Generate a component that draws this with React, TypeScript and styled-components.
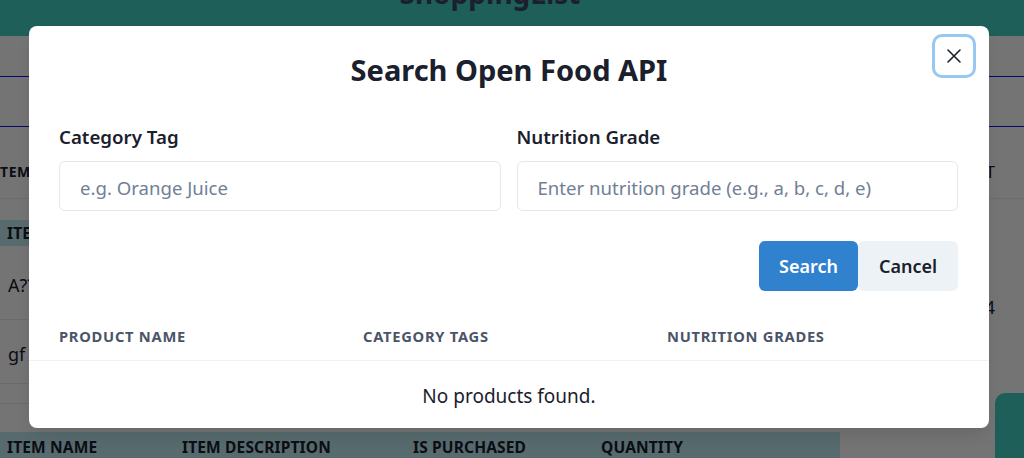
import React from "react";
import styled, { createGlobalStyle } from "styled-components";

const FONT = `"Noto Sans", "Open Sans", sans-serif`;

const Global = createGlobalStyle`
  html, body { margin: 0; padding: 0; }
  body {
    width: 1024px;
    height: 458px;
    overflow: hidden;
    background: #fcfdff;
    font-family: ${FONT};
    color: #1a202c;
  }
  * { box-sizing: border-box; }
`;

/* ---------- background page ---------- */
const Page = styled.div`
  position: relative;
  width: 1024px;
  height: 458px;
  overflow: hidden;
`;

const TopBar = styled.header`
  position: relative;
  z-index: 20;
  height: 36px;
  background: #1f5f5a;
  display: flex;
  justify-content: center;
  overflow: hidden;
`;

const AppTitle = styled.h1`
  margin: -24px 0 0 -44px;
  font-size: 28px;
  line-height: 34px;
  font-weight: 700;
  color: #1a202c;
`;

const Spacer = styled.div<{ $h: number }>`
  height: ${(p) => p.$h}px;
`;

const NavStrip = styled.nav`
  height: 51px;
  border-top: 1px solid #1010ff;
  border-bottom: 1px solid #1010ff;
`;

const SectionRow = styled.div`
  display: flex;
  justify-content: space-between;
  align-items: center;
  height: 72px;
  padding-top: 18px;
  border-bottom: 1px solid #e6e9ef;
  font-weight: 700;
  font-size: 14px;
  color: #1a202c;
`;

const SectionLeft = styled.span`
  margin-left: -6px;
  letter-spacing: 0.04em;
`;

const SectionRight = styled.span`
  margin-right: 29px;
  font-weight: 400;
  font-size: 17px;
`;

const Layout = styled.div`
  display: grid;
  grid-template-columns: 840px 1fr;
`;

const TableBand = styled.div<{ $top: number; $h: number }>`
  margin-top: ${(p) => p.$top}px;
  height: ${(p) => p.$h}px;
  background: #bde9f0;
  display: grid;
  grid-template-columns: 175px 231px 188px 1fr;
  align-items: center;
  padding-left: 7px;
  font-size: 15.5px;
  font-weight: 700;
  color: #1a202c;
  letter-spacing: 0.01em;
`;

const DataRow = styled.div<{ $h: number }>`
  height: ${(p) => p.$h}px;
  display: flex;
  align-items: center;
  padding-left: 8px;
  padding-top: 4px;
  border-bottom: 1px solid #e6e9ef;
  font-size: 18px;
  color: #1a202c;
`;

const SideCol = styled.div`
  display: flex;
  flex-direction: column;
  align-items: flex-end;
  padding-right: 29px;
  padding-top: 66px;
  font-size: 18px;
`;

const Fab = styled.div`
  position: absolute;
  z-index: 20;
  right: -20px;
  bottom: -20px;
  width: 49px;
  height: 85px;
  border-radius: 10px;
  background: #1f5f5a;
`;

/* ---------- overlay & modal ---------- */
const Backdrop = styled.div`
  position: absolute;
  inset: 0;
  z-index: 10;
  background: rgba(0, 0, 0, 0.54);
`;

const Modal = styled.section`
  position: absolute;
  z-index: 30;
  left: 29px;
  top: 26px;
  width: 960px;
  height: 402px;
  background: #ffffff;
  border-radius: 8px;
  box-shadow: 0 10px 15px -3px rgba(0, 0, 0, 0.1);
  display: flex;
  flex-direction: column;
`;

const ModalTitle = styled.h2`
  margin: 26px 0 0;
  text-align: center;
  font-size: 29px;
  line-height: 35px;
  font-weight: 700;
  color: #1a202c;
`;

const CloseButton = styled.button`
  position: absolute;
  top: 11px;
  right: 16px;
  width: 38px;
  height: 38px;
  border: none;
  border-radius: 7px;
  background: #ffffff;
  box-shadow: 0 0 0 3px #97c8f1;
  display: flex;
  align-items: center;
  justify-content: center;
  padding: 0;
  color: #1a202c;
`;

const Fields = styled.div`
  margin-top: 36px;
  padding: 0 31px 0 30px;
  display: grid;
  grid-template-columns: 1fr 1fr;
  column-gap: 16px;
`;

const Field = styled.div`
  display: flex;
  flex-direction: column;
`;

const Label = styled.label`
  font-size: 18.7px;
  line-height: 27px;
  font-weight: 600;
  color: #1a202c;
  margin-bottom: 11px;
`;

const Input = styled.input`
  height: 50px;
  width: 100%;
  border: 1px solid #e2e8f0;
  border-radius: 6px;
  padding: 3px 20px 0;
  font-family: ${FONT};
  font-size: 18.6px;
  color: #1a202c;
  outline: none;
  &::placeholder {
    color: #718096;
  }
`;

const Actions = styled.div`
  margin-top: 30px;
  padding: 0 31px 0 30px;
  display: flex;
  justify-content: flex-end;
`;

const Button = styled.button<{ $primary?: boolean }>`
  height: 50px;
  width: ${(p) => (p.$primary ? "99px" : "100px")};
  border: none;
  border-radius: 6px;
  font-family: ${FONT};
  font-size: 18px;
  font-weight: 600;
  background: ${(p) => (p.$primary ? "#3182ce" : "#edf2f7")};
  color: ${(p) => (p.$primary ? "#ffffff" : "#1a202c")};
  padding: 0;
`;

const Table = styled.div`
  margin-top: 23px;
  display: flex;
  flex-direction: column;
`;

const HeadRow = styled.div`
  display: grid;
  grid-template-columns: 304px 304px 1fr;
  padding: 12px 30px 14px;
  border-bottom: 1px solid #edf2f7;
`;

const HeadCell = styled.div`
  font-size: 14.7px;
  line-height: 20px;
  font-weight: 700;
  letter-spacing: 0.05em;
  text-transform: uppercase;
  color: #4a5568;
`;

const EmptyRow = styled.div`
  padding: 22px 0 17px;
  text-align: center;
  font-size: 19px;
  line-height: 27px;
  color: #1a202c;
`;

const CloseIcon = () => (
  <svg width="16" height="16" viewBox="0 0 16 16" fill="none" stroke="currentColor" strokeWidth="1.6" strokeLinecap="round">
    <path d="M2 2 L14 14 M14 2 L2 14" />
  </svg>
);

export default function App() {
  return (
    <>
      <Global />
      <Page>
        <TopBar>
          <AppTitle>ShoppingList</AppTitle>
        </TopBar>
        <Spacer $h={40} />
        <NavStrip />
        <SectionRow>
          <SectionLeft>ITEMS</SectionLeft>
          <SectionRight>COST</SectionRight>
        </SectionRow>
        <Layout>
          <div>
            <TableBand $top={21} $h={26}>
              <span>ITEM NAME</span>
              <span>ITEM DESCRIPTION</span>
              <span>IS PURCHASED</span>
              <span>QUANTITY</span>
            </TableBand>
            <DataRow $h={74}>A??</DataRow>
            <DataRow $h={64}>gf</DataRow>
            <DataRow $h={20} />
            <TableBand $top={28} $h={30}>
              <span>ITEM NAME</span>
              <span>ITEM DESCRIPTION</span>
              <span>IS PURCHASED</span>
              <span>QUANTITY</span>
            </TableBand>
          </div>
          <SideCol>
            <Spacer $h={30} />
            <span>14</span>
          </SideCol>
        </Layout>
        <Fab />
        <Backdrop />
        <Modal role="dialog" aria-label="Search Open Food API">
          <ModalTitle>Search Open Food API</ModalTitle>
          <CloseButton aria-label="Close">
            <CloseIcon />
          </CloseButton>
          <Fields>
            <Field>
              <Label>Category Tag</Label>
              <Input placeholder="e.g. Orange Juice" />
            </Field>
            <Field>
              <Label>Nutrition Grade</Label>
              <Input placeholder="Enter nutrition grade (e.g., a, b, c, d, e)" />
            </Field>
          </Fields>
          <Actions>
            <Button $primary>Search</Button>
            <Button>Cancel</Button>
          </Actions>
          <Table>
            <HeadRow>
              <HeadCell>Product Name</HeadCell>
              <HeadCell>Category Tags</HeadCell>
              <HeadCell>Nutrition Grades</HeadCell>
            </HeadRow>
            <EmptyRow>No products found.</EmptyRow>
          </Table>
        </Modal>
      </Page>
    </>
  );
}
